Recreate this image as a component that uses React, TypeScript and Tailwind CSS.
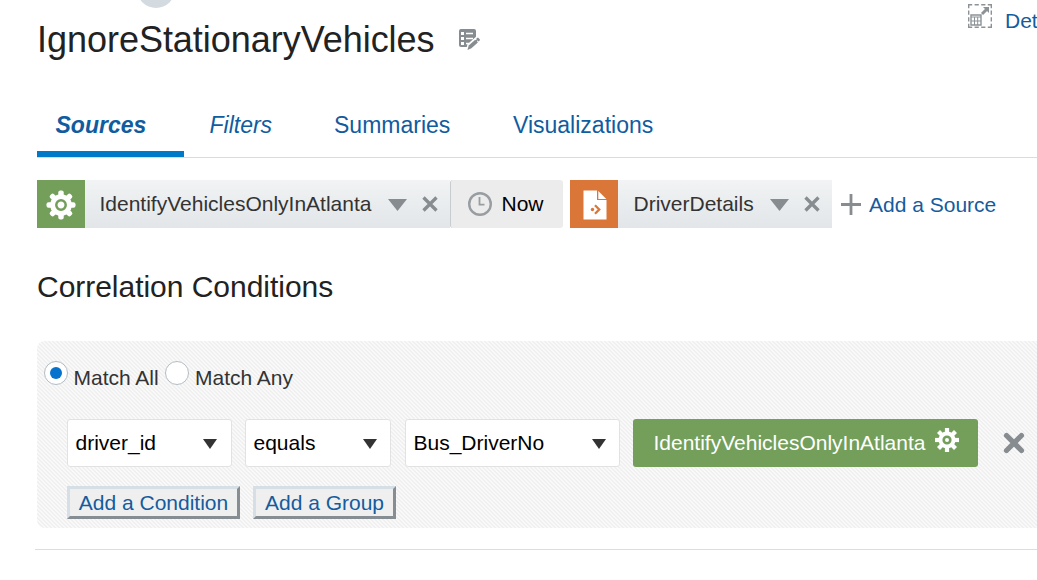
import React from "react";

const spokes = [0, 45, 90, 135, 180, 225, 270, 315];

function SourceGear() {
  return (
    <svg width="30" height="30" viewBox="-15 -15 30 30" fill="#fff">
      {spokes.map((a) => (
        <rect key={a} x="-2.7" y="-14.500" width="5.400" height="8" rx="2" transform={`rotate(${a})`} />
      ))}
      <circle r="10.800" />
      <circle r="4.700" fill="none" stroke="#739f5b" strokeWidth="2.500" />
    </svg>
  );
}

function TagGear() {
  return (
    <svg width="24" height="24" viewBox="-12 -12 24 24" fill="#fff">
      {spokes.map((a) => (
        <rect key={a} x="-2.100" y="-12" width="4.200" height="5.500" transform={`rotate(${a})`} />
      ))}
      <circle r="8.500" />
      <circle r="3.300" fill="none" stroke="#739f5b" strokeWidth="2.600" />
    </svg>
  );
}

function EditIcon() {
  return (
    <svg width="21" height="22" viewBox="0 0 21 22">
      <path d="M2 0h13a2 2 0 0 1 2 2v7l-9 9H2a2 2 0 0 1-2-2V2a2 2 0 0 1 2-2z" fill="#878c90" />
      <path d="M2 3h3v3H2zM2 8h3v3H2zM2 13h3v3H2z" fill="#fff" />
      <path d="M7 4.500h7M7 9.500h7M7 14.500h3" stroke="#fff" strokeWidth="1.300" />
      <path d="M8.500 20.500l1-4.500 8-7 3 3-7.500 7z" fill="#878c90" stroke="#fff" strokeWidth="2.400" />
      <path d="M8.500 21l1.200-4.500 6.500-5.800 2.700 2.700-6.500 5.800z" fill="#878c90" />
      <path d="M17 10l1.200-1.100a1 1 0 0 1 1.300 0l1.200 1.300a1 1 0 0 1 0 1.200l-1.100 1z" fill="#878c90" />
    </svg>
  );
}

function ExpandIcon() {
  return (
    <svg width="24" height="24" viewBox="0 0 24 24" fill="none" stroke="#8d9296">
      <path
        d="M0 .7h24M0 23.300h24M.7 0v24M23.300 0v24"
        strokeWidth="1.400"
        strokeDasharray="4.200 2.400"
      />
      <path d="M3 11h10v10H3z" strokeWidth="1.400" />
      <path d="M3 13h10M3 17h10M6.500 13v8M9.700 13v8" />
      <path d="M14 10l5-5" strokeWidth="3" />
      <path d="M15 3h6v6z" fill="#8d9296" stroke="none" />
    </svg>
  );
}

function ClockIcon() {
  return (
    <svg width="24" height="24" viewBox="0 0 24 24" fill="none" stroke="#979da1">
      <circle cx="12" cy="12" r="10.800" strokeWidth="2.400" />
      <path d="M11.500 5v7.700h5" strokeWidth="1.800" />
    </svg>
  );
}

function FileIcon() {
  return (
    <svg width="24" height="30" viewBox="0 0 24 30">
      <path d="M0.500 0.500H14V10h9.500v19.500h-23z" fill="#fff" />
      <path d="M15.300 1l8 8h-8z" fill="#fff" />
      <circle cx="9.500" cy="19.500" r="1.700" fill="#da7638" />
      <path d="M12 15.300l4.200 4.200-4.200 4.200" fill="none" stroke="#da7638" strokeWidth="2.300" />
    </svg>
  );
}

function ChipCross() {
  return (
    <svg width="16" height="16" viewBox="0 0 16 16" stroke="#878c90" strokeWidth="3.300">
      <path d="M1.500 1.500l13 13M14.500 1.500l-13 13" />
    </svg>
  );
}

function RowCross() {
  return (
    <svg width="22" height="22" viewBox="0 0 22 22" stroke="#878c90" strokeWidth="5.200" strokeLinecap="round">
      <path d="M3.500 3.500l15 15M18.500 3.500l-15 15" />
    </svg>
  );
}

function SourceActions() {
  return (
    <>
      <svg className="ml-auto mt-[2px]" width="19" height="12" viewBox="0 0 19 12">
        <path d="M0 0h19l-9.500 12z" fill="#878c90" />
      </svg>
      <span className="ml-[15px] mr-[12px]">
        <ChipCross />
      </span>
    </>
  );
}

function Select({ label, box }: { label: string; box: string }) {
  return (
    <div className={`flex h-12 items-center justify-between rounded-[3px] border border-[#e2e2e2] bg-white pl-[7.500px] text-black ${box}`}>
      <span>{label}</span>
      <svg className="mt-px" width="14" height="10" viewBox="0 0 14 10">
        <path d="M0 0h14L7 10z" fill="#333" />
      </svg>
    </div>
  );
}

const stripes =
  "bg-[#f5f5f5] bg-[repeating-linear-gradient(45deg,#f9f9f9_0px,#f9f9f9_1.414px,#f0f0f0_1.414px,#f0f0f0_2.828px)]";

const bevel =
  "h-[33px] border-[3px] border-t-[#d6dfe6] border-l-[#d6dfe6] border-r-[#878e93] border-b-[#878e93] bg-[#efefef] leading-[28px] text-[#145c9e] whitespace-nowrap";

export default function App() {
  return (
    <div className="relative h-[580px] w-[1037px] overflow-hidden bg-white pl-[37px] font-['Liberation_Sans',Arial,sans-serif] text-[21px] leading-6 text-[#333]">
      <div className="absolute left-[137px] top-[-30px] h-[38px] w-[38px] rounded-full bg-[#d3dbe1]" />
      <header className="flex h-[98px] items-start">
        <h1 className="mt-[20px] text-[36px] leading-[40px] tracking-[-0.030px] text-[#222]">IgnoreStationaryVehicles</h1>
        <span className="ml-[24px] mt-[29px]">
          <EditIcon />
        </span>
        <div className="ml-auto flex w-[69px] shrink-0 pt-[4px] text-[#145c9e]">
          <span className="shrink-0">
            <ExpandIcon />
          </span>
          <span className="ml-[13px] mt-[5px] whitespace-nowrap">Det</span>
        </div>
      </header>

      <nav className="flex h-[60px] border-b border-[#d3dde3] text-[23px] leading-[54px] text-[#105c9f]">
        <div className="h-[59px] w-[147px] border-b-[6px] border-[#007ac8] pl-[18.500px] font-bold italic">Sources</div>
        <div className="w-[150px] pl-[25.500px] italic">Filters</div>
        <div className="w-[179px]">Summaries</div>
        <div>Visualizations</div>
      </nav>

      <section className="mt-[22px] flex h-12 items-center">
        <div className="flex h-12 w-[413px] items-center bg-linear-to-b from-[#f1f3f4] to-[#e2e6e9]">
          <span className="flex h-12 w-12 items-center justify-center bg-[#739f5b] pr-[1px] pt-[1px]">
            <SourceGear />
          </span>
          <span className="ml-[14.500px]">IdentifyVehiclesOnlyInAtlanta</span>
          <SourceActions />
        </div>
        <div className="flex h-12 w-[113px] items-center rounded-[3px] border-l border-[#c9cccf] bg-[#ececec] pl-[17px] text-black">
          <ClockIcon />
          <span className="ml-[9.500px]">Now</span>
        </div>
        <div className="ml-[7px] flex h-12 w-[262px] items-center bg-linear-to-b from-[#f1f3f4] to-[#e2e6e9]">
          <span className="flex h-12 w-12 items-center justify-center bg-[#da7638] pl-[2px] pt-[1px]">
            <FileIcon />
          </span>
          <span className="ml-[15.500px]">DriverDetails</span>
          <SourceActions />
        </div>
        <svg className="ml-[9px]" width="20" height="21" viewBox="0 0 20 21" stroke="#878c90" strokeWidth="2.800">
          <path d="M10 0v21M0 10.500h20" />
        </svg>
        <span className="ml-[8px] mt-[2px] text-[#145c9e]">Add a Source</span>
      </section>

      <h2 className="mt-[41px] text-[30px] leading-[36px] tracking-[-0.030px] text-[#222]">Correlation Conditions</h2>

      <section className={`mt-[36px] h-[187px] rounded-l-[8px] ${stripes}`}>
        <div className="flex h-[78px] pl-[7px] pt-[20px]">
          <span className="flex h-6 w-6 items-center justify-center rounded-full border border-[#b3bdc5] bg-white">
            <span className="h-3 w-3 rounded-full bg-[#0572ce]" />
          </span>
          <span className="ml-[5.500px] mt-[5px] w-[91.500px]">Match All</span>
          <span className="h-6 w-6 rounded-full border border-[#b3bdc5] bg-white" />
          <span className="ml-[6px] mt-[5px]">Match Any</span>
        </div>
        <div className="flex h-12 items-center pl-[30px]">
          <Select label="driver_id" box="w-[165px] pr-[14px]" />
          <Select label="equals" box="ml-[13px] w-[146px] pr-[13px]" />
          <Select label="Bus_DriverNo" box="ml-[14px] w-[215px] pr-[13px]" />
          <div className="ml-[13px] flex h-12 w-[345px] items-center rounded-[3px] bg-[#739f5b] pl-[20.500px] text-white">
            <span>IdentifyVehiclesOnlyInAtlanta</span>
            <span className="mb-[6px] ml-[9px]">
              <TagGear />
            </span>
          </div>
          <span className="ml-[25px]">
            <RowCross />
          </span>
        </div>
        <div className="flex pl-[30px] pt-[19px]">
          <button className={`w-[173px] ${bevel}`}>Add a Condition</button>
          <button className={`ml-[13px] w-[143px] ${bevel}`}>Add a Group</button>
        </div>
      </section>

      <div className="-ml-[2px] mt-[21px] h-px bg-[#d6dfe6]" />
    </div>
  );
}
